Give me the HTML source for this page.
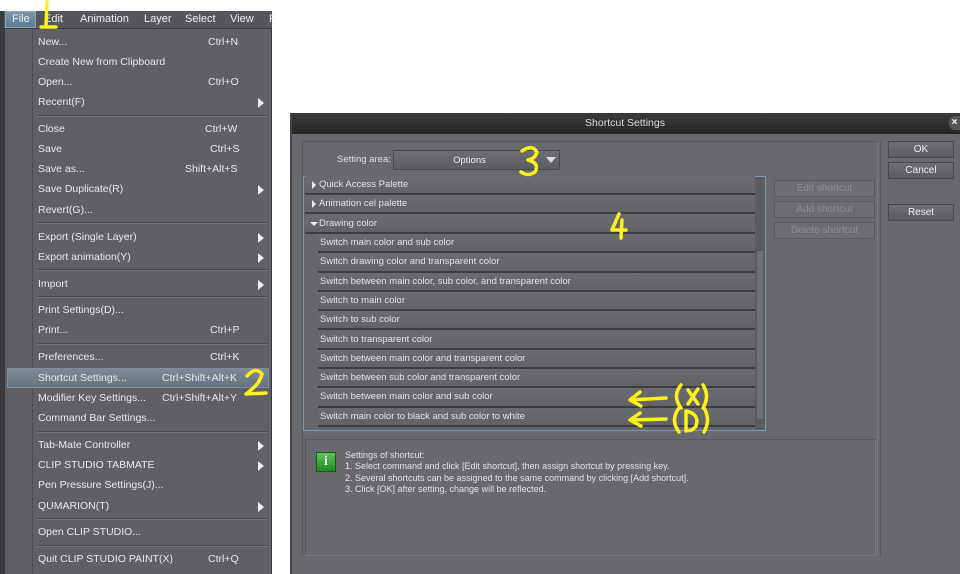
<!DOCTYPE html>
<html><head><style>
*{margin:0;padding:0;box-sizing:border-box}
body{width:960px;height:574px;background:#fff;position:relative;overflow:hidden;font-family:"Liberation Sans",sans-serif;font-size:10.5px;color:#e8e8e8}
.abs{position:absolute}
#bar{left:4px;top:11px;width:268px;height:18px;background:#55575b;border-bottom:1px solid #3a3b3e}
#bar span{position:absolute;top:2px;font-size:11px;color:#eee}
#menu{left:4px;top:29px;width:268px;height:545px;background:#5f6064;border-left:1px solid #3a3a3a;border-right:1px solid #3a3a3a}
#gut{left:32px;top:29px;width:1px;height:545px;background:#4c4d50}
.mi{position:absolute;left:38px;font-size:10.5px;color:#eaeaea;height:14px;line-height:14px}
.sc{position:absolute;right:34px;font-size:10.5px;color:#eaeaea;line-height:14px}
.ar{position:absolute;left:258px;width:0;height:0;border-top:5px solid transparent;border-bottom:5px solid transparent;border-left:6px solid #eee}
.sep{position:absolute;left:37px;width:231px;height:2px;background:#4a4b4e;border-bottom:1px solid #727376}
#dlg{left:290px;top:113px;width:670px;height:461px;background:#68696d}
#title{left:290px;top:113px;width:670px;height:21px;background:linear-gradient(#3a3a3a,#262626);color:#ddd;font-size:10.5px;text-align:center;line-height:21px}
.btn{position:absolute;background:linear-gradient(#6e6f73,#5c5d61);border:1px solid #48494c;color:#eee;font-size:10px;text-align:center;line-height:16px;height:17px}
.btn.dis{color:#8d8e92;background:#6c6d71;border-color:#5a5b5e}
.row{position:absolute;left:305px;width:450px;height:19.3px;border-bottom:2px solid #3c3d40;font-size:9.5px;color:#e4e4e4;line-height:17px;background:linear-gradient(#6a6b6f,#626367)}
</style></head><body>
<!-- left dark edge of app -->
<div class="abs" style="left:0;top:11px;width:4px;height:563px;background:#3a3b3e"></div>
<div class="abs" id="bar">
<span style="left:1px;top:0;width:31px;height:17px;background:linear-gradient(#7b95ad,#5f7a93);border:1px solid #8aa;"></span>
<span style="left:8px">File</span><span style="left:40px">Edit</span><span style="left:76px">Animation</span><span style="left:140px">Layer</span><span style="left:181px">Select</span><span style="left:226px">View</span><span style="left:265px">F</span>
</div>
<div class="abs" id="menu"></div>
<div class="abs" id="gut"></div>
<div class="abs" style="left:7px;top:368px;width:262px;height:20px;background:linear-gradient(#7a8a97,#67747f);border:1px solid #7f8e99"></div>
<div class="mi" style="top:35px">New...</div><div class="sc" style="top:35px;left:208px">Ctrl+N</div>
<div class="mi" style="top:55px">Create New from Clipboard</div>
<div class="mi" style="top:75px">Open...</div><div class="sc" style="top:75px;left:208px">Ctrl+O</div>
<div class="mi" style="top:95px">Recent(F)</div><div class="ar" style="top:98px"></div>
<div class="sep" style="top:115px"></div>
<div class="mi" style="top:122px">Close</div><div class="sc" style="top:122px;left:205px">Ctrl+W</div>
<div class="mi" style="top:142px">Save</div><div class="sc" style="top:142px;left:210px">Ctrl+S</div>
<div class="mi" style="top:162px">Save as...</div><div class="sc" style="top:162px;left:185px">Shift+Alt+S</div>
<div class="mi" style="top:182px">Save Duplicate(R)</div><div class="ar" style="top:185px"></div>
<div class="mi" style="top:203px">Revert(G)...</div>
<div class="sep" style="top:222px"></div>
<div class="mi" style="top:230px">Export (Single Layer)</div><div class="ar" style="top:233px"></div>
<div class="mi" style="top:250px">Export animation(Y)</div><div class="ar" style="top:253px"></div>
<div class="sep" style="top:269px"></div>
<div class="mi" style="top:277px">Import</div><div class="ar" style="top:280px"></div>
<div class="sep" style="top:296px"></div>
<div class="mi" style="top:303px">Print Settings(D)...</div>
<div class="mi" style="top:323px">Print...</div><div class="sc" style="top:323px;left:210px">Ctrl+P</div>
<div class="sep" style="top:343px"></div>
<div class="mi" style="top:350px">Preferences...</div><div class="sc" style="top:350px;left:210px">Ctrl+K</div>
<div class="mi" style="top:371px">Shortcut Settings...</div><div class="sc" style="top:371px;left:162px">Ctrl+Shift+Alt+K</div>
<div class="mi" style="top:391px">Modifier Key Settings...</div><div class="sc" style="top:391px;left:162px">Ctrl+Shift+Alt+Y</div>
<div class="mi" style="top:411px">Command Bar Settings...</div>
<div class="sep" style="top:431px"></div>
<div class="mi" style="top:438px">Tab-Mate Controller</div><div class="ar" style="top:441px"></div>
<div class="mi" style="top:458px">CLIP STUDIO TABMATE</div><div class="ar" style="top:461px"></div>
<div class="mi" style="top:478px">Pen Pressure Settings(J)...</div>
<div class="mi" style="top:499px">QUMARION(T)</div><div class="ar" style="top:502px"></div>
<div class="sep" style="top:518px"></div>
<div class="mi" style="top:525px">Open CLIP STUDIO...</div>
<div class="sep" style="top:545px"></div>
<div class="mi" style="top:552px">Quit CLIP STUDIO PAINT(X)</div><div class="sc" style="top:552px;left:208px">Ctrl+Q</div>

<!-- dialog -->
<div class="abs" id="dlg"></div>
<div class="abs" id="title">Shortcut Settings</div>
<div class="abs" style="left:949px;top:116px;width:11px;height:14px;background:#555;color:#fff;font-size:10px;font-weight:bold;line-height:14px;text-align:center;border-radius:6px 0 0 6px">×</div>
<div class="abs" style="left:302px;top:141px;width:576px;height:416px;border:1px solid #58595c;border-right-color:#76777a;border-bottom-color:#76777a"></div>
<div class="abs" style="left:337px;top:154px;font-size:9.5px;color:#e0e0e0">Setting area:</div>
<div class="btn" style="left:393px;top:150px;width:167px;height:20px;line-height:19px;font-size:9.5px"><span style="position:relative;left:-7px">Options</span></div>
<div class="abs" style="left:546px;top:157px;border-left:5px solid transparent;border-right:5px solid transparent;border-top:6px solid #ddd"></div>
<!-- list -->
<div class="abs" style="left:303px;top:176px;width:463px;height:255px;background:#656669;border:1px solid #7f9bb0"></div>
<div class="row" style="top:176px;left:305px;padding-left:14px">Quick Access Palette</div>
<div class="row" style="top:195px;left:305px;padding-left:14px">Animation cel palette</div>
<div class="row" style="top:214.6px;left:305px;padding-left:14px">Drawing color</div>
<div class="abs" style="left:312px;top:181px;border-top:4px solid transparent;border-bottom:4px solid transparent;border-left:4px solid #eee"></div>
<div class="abs" style="left:312px;top:200px;border-top:4px solid transparent;border-bottom:4px solid transparent;border-left:4px solid #eee"></div>
<div class="abs" style="left:310px;top:222px;border-left:4px solid transparent;border-right:4px solid transparent;border-top:4px solid #eee"></div>
<div class="row" style="top:234px;left:318px;width:437px;padding-left:2px">Switch main color and sub color</div>
<div class="row" style="top:253.3px;left:318px;width:437px;padding-left:2px">Switch drawing color and transparent color</div>
<div class="row" style="top:272.6px;left:318px;width:437px;padding-left:2px">Switch between main color, sub color, and transparent color</div>
<div class="row" style="top:291.9px;left:318px;width:437px;padding-left:2px">Switch to main color</div>
<div class="row" style="top:311.2px;left:318px;width:437px;padding-left:2px">Switch to sub color</div>
<div class="row" style="top:330.5px;left:318px;width:437px;padding-left:2px">Switch to transparent color</div>
<div class="row" style="top:349.8px;left:318px;width:437px;padding-left:2px">Switch between main color and transparent color</div>
<div class="row" style="top:369.1px;left:318px;width:437px;padding-left:2px">Switch between sub color and transparent color</div>
<div class="row" style="top:388.4px;left:318px;width:437px;padding-left:2px">Switch between main color and sub color</div>
<div class="row" style="top:407.7px;left:318px;width:437px;padding-left:2px">Switch main color to black and sub color to white</div>
<div class="abs" style="left:755px;top:177px;width:10px;height:253px;background:#5b5c5f"></div>
<div class="abs" style="left:756px;top:250px;width:8px;height:170px;background:#707174;border:1px solid #58595c"></div>
<!-- buttons -->
<div class="btn dis" style="left:774px;top:180px;width:101px">Edit shortcut</div>
<div class="btn dis" style="left:774px;top:201px;width:101px">Add shortcut</div>
<div class="btn dis" style="left:774px;top:222px;width:101px">Delete shortcut</div>
<div class="btn" style="left:888px;top:141px;width:66px">OK</div>
<div class="btn" style="left:888px;top:162px;width:66px">Cancel</div>
<div class="btn" style="left:888px;top:204px;width:66px">Reset</div>
<div class="abs" style="left:880px;top:141px;width:1px;height:415px;background:#5a5b5e"></div>
<!-- info -->
<div class="abs" style="left:305px;top:439px;width:571px;height:117px;border:1px solid #58595c;border-right-color:#76777a;border-bottom-color:#76777a"></div>
<div class="abs" style="left:316px;top:452px;width:20px;height:20px;background:linear-gradient(#5fc35f,#1e8a1e);border:1px solid #0f5f0f;color:#fff;font:bold 14px 'Liberation Serif',serif;text-align:center;line-height:18px">i</div>
<div class="abs" style="left:345px;top:450px;font-size:9px;line-height:11.3px;color:#e4e4e4">Settings of shortcut:<br>1. Select command and click [Edit shortcut], then assign shortcut by pressing key.<br>2. Several shortcuts can be assigned to the same command by clicking [Add shortcut].<br>3. Click [OK] after setting, change will be reflected.</div>
<div class="abs" style="left:290px;top:556px;width:670px;height:18px;background:#68696d"></div>
<div class="abs" style="left:290px;top:113px;width:2px;height:461px;background:#444"></div>
<!-- annotations -->
<svg class="abs" style="left:0;top:0" width="960" height="574" fill="none" stroke="#ffef1a" stroke-width="3.5" stroke-linecap="round" stroke-linejoin="round">
<path d="M47 2 L46 26 M41 27 L56 27"/>
<path d="M247 376 Q256 366 262 374 Q260 384 246 394 L266 393"/>
<path d="M522 151 Q532 144 537 152 Q535 159 528 160 Q540 163 535 172 Q528 177 521 172"/>
<path d="M619 214 L612 230 L626 230 M622 220 L621 238"/>
<path d="M666 398 L630 400 M640 392 L630 400 L641 406"/>
<path d="M681 385 Q672 396 681 408 M688 390 L698 404 M698 389 L688 404 M703 385 Q710 396 703 408"/>
<path d="M666 419 L630 420 M640 413 L630 420 L641 426"/>
<path d="M679 408 Q670 420 679 432 M686 411 L686 431 M686 411 Q700 414 696 426 Q692 432 686 430 M704 408 Q711 420 704 432"/>
</svg>
</body></html>
